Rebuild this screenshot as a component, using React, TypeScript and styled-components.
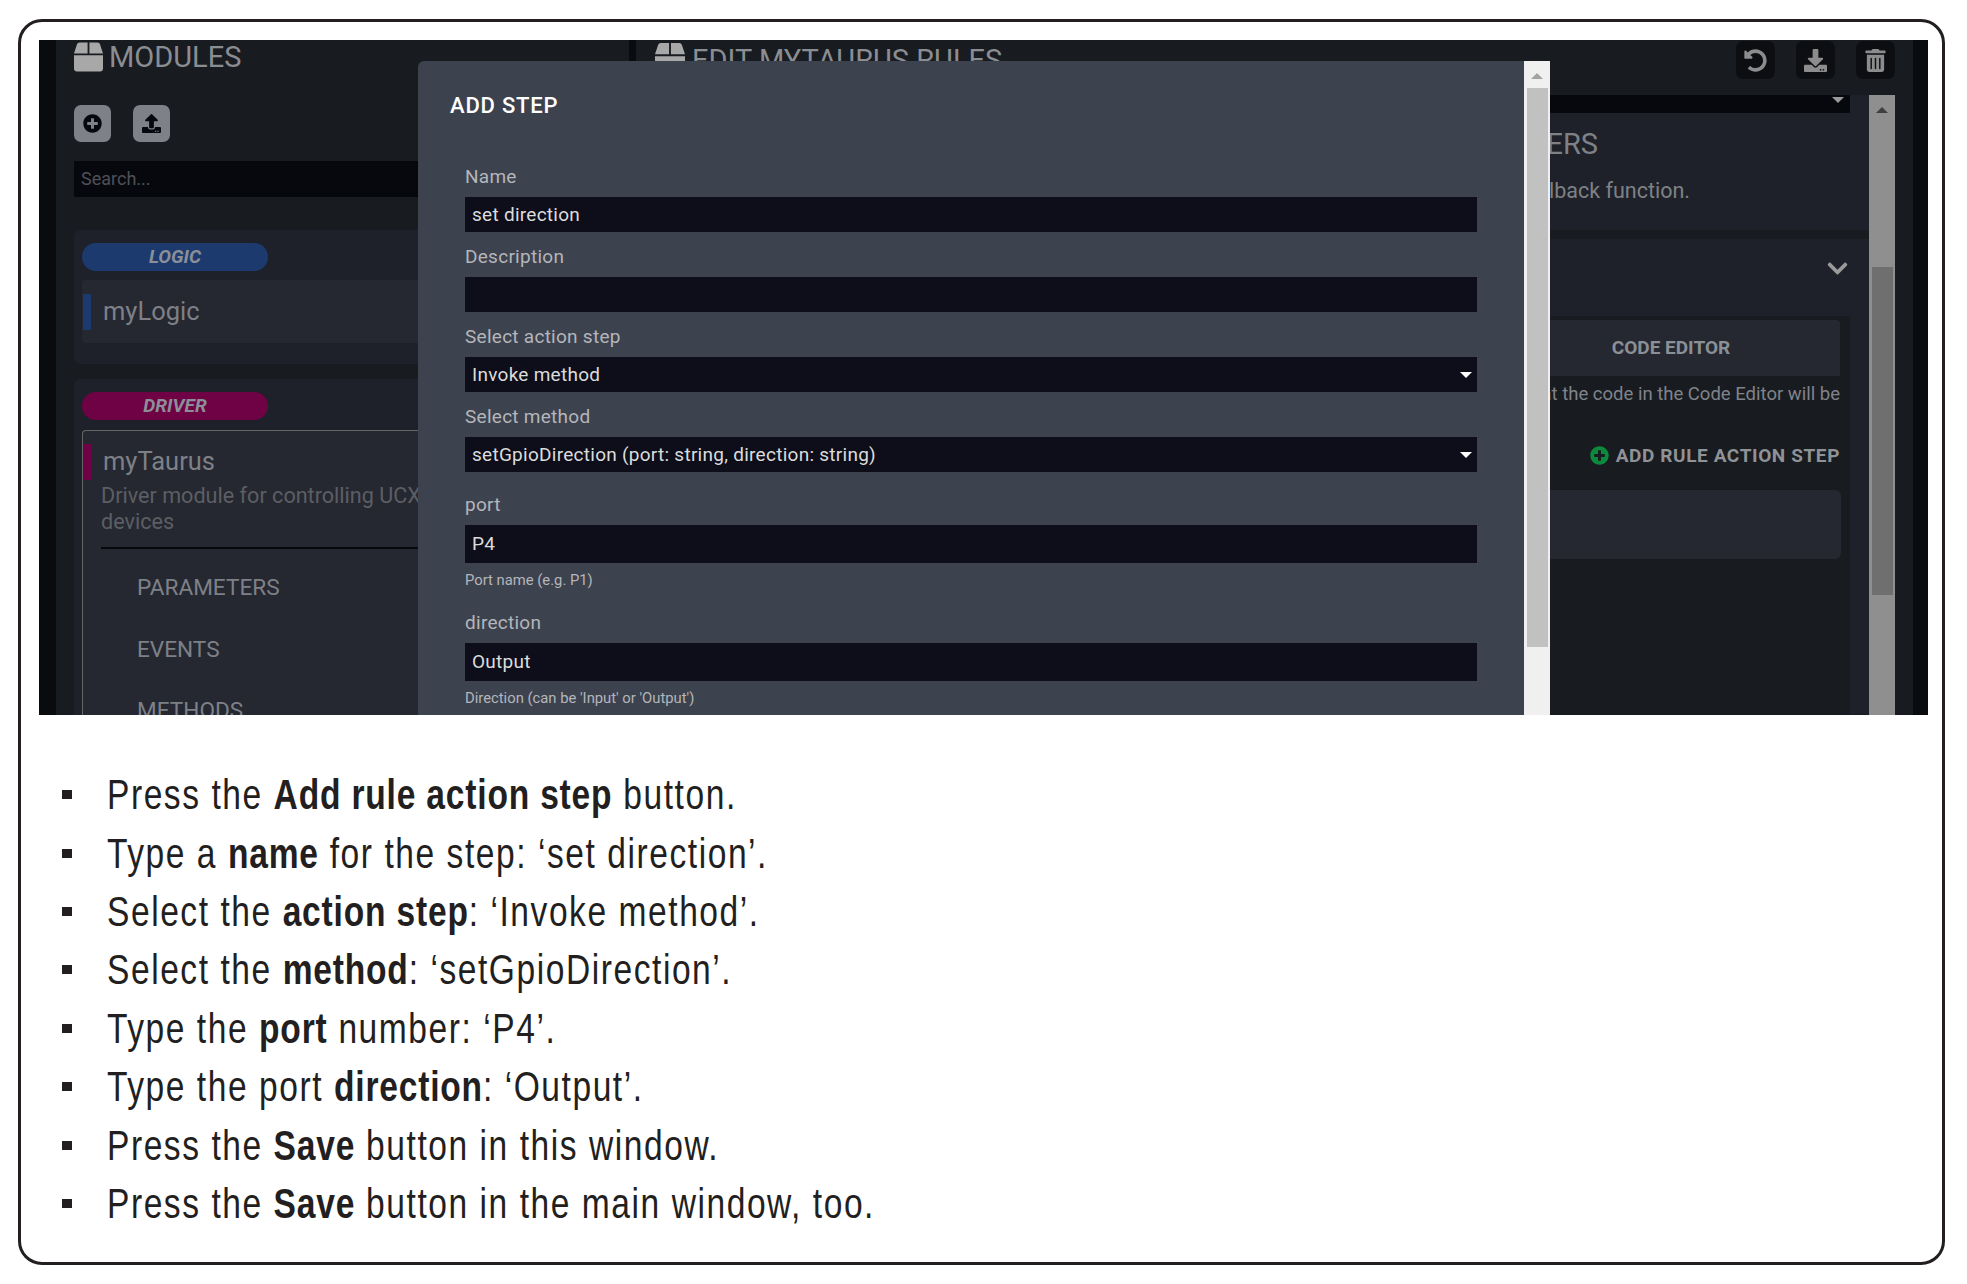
import React from 'react';
import styled, { createGlobalStyle } from 'styled-components';
import { FaBox, FaChevronDown, FaDownload, FaPlusCircle, FaTrashAlt, FaUndoAlt, FaUpload } from 'react-icons/fa';

const GlobalStyle = createGlobalStyle`
  html, body {
    margin: 0;
    background: #fff;
  }
  * {
    box-sizing: border-box;
  }
`;

const steps = [
  <>Press the <b>Add rule action step</b> button.</>,
  <>Type a <b>name</b> for the step: ‘set direction’.</>,
  <>Select the <b>action step</b>: ‘Invoke method’.</>,
  <>Select the <b>method</b>: ‘setGpioDirection’.</>,
  <>Type the <b>port</b> number: ‘P4’.</>,
  <>Type the port <b>direction</b>: ‘Output’.</>,
  <>Press the <b>Save</b> button in this window.</>,
  <>Press the <b>Save</b> button in the main window, too.</>,
];

export default function App() {
  return (
    <>
      <GlobalStyle />
      <Style.Frame>
        <Style.Shot>
          <Style.Gutter />
          <Style.Sidebar>
            <Style.PanelTitle>
              <FaBox />
              MODULES
            </Style.PanelTitle>
            <Style.ToolRow>
              <Style.LightButton><FaPlusCircle /></Style.LightButton>
              <Style.LightButton><FaUpload /></Style.LightButton>
            </Style.ToolRow>
            <Style.Search>Search...</Style.Search>

            <Style.Group>
              <Style.Pill $color="#1c3a6e">LOGIC</Style.Pill>
              <Style.Module>
                <Style.ModuleName $color="#1c3a6e">myLogic</Style.ModuleName>
              </Style.Module>
            </Style.Group>

            <Style.Group>
              <Style.Pill $color="#6f0145">DRIVER</Style.Pill>
              <Style.Module $selected>
                <Style.ModuleName $color="#6f0145">myTaurus</Style.ModuleName>
                <Style.ModuleText>Driver module for controlling UCX devices</Style.ModuleText>
                <Style.ModuleDivider />
                <Style.ModuleLink>PARAMETERS</Style.ModuleLink>
                <Style.ModuleLink>EVENTS</Style.ModuleLink>
                <Style.ModuleLink>METHODS</Style.ModuleLink>
              </Style.Module>
            </Style.Group>
          </Style.Sidebar>

          <Style.Main>
            <Style.MainHeader>
              <Style.MainTitle>
                <FaBox />
                EDIT MYTAURUS RULES
              </Style.MainTitle>
              <Style.Actions>
                <Style.DarkButton><FaUndoAlt /></Style.DarkButton>
                <Style.DarkButton><FaDownload /></Style.DarkButton>
                <Style.DarkButton><FaTrashAlt /></Style.DarkButton>
              </Style.Actions>
            </Style.MainHeader>
            <Style.MainBody>
              <Style.Sections>
                <Style.HandlerSection>
                  <Style.TopSelect><Style.TinyArrow /></Style.TopSelect>
                  <Style.SectionTitle>EVENT HANDLERS</Style.SectionTitle>
                  <Style.SectionText>Write the rule as a callback function.</Style.SectionText>
                </Style.HandlerSection>
                <Style.RuleSection>
                  <Style.ChevronRow><FaChevronDown /></Style.ChevronRow>
                  <Style.RuleBody>
                    <Style.Tabs>
                      <Style.Tab>BUILDER</Style.Tab>
                      <Style.Tab>CODE EDITOR</Style.Tab>
                    </Style.Tabs>
                    <Style.Note>Note that the code in the Code Editor will be</Style.Note>
                    <Style.AddStep>
                      <FaPlusCircle />
                      ADD RULE ACTION STEP
                    </Style.AddStep>
                    <Style.StepCard />
                  </Style.RuleBody>
                </Style.RuleSection>
              </Style.Sections>
              <Style.DimScrollbar>
                <Style.ScrollCap><Style.UpArrow $color="#3f3f3f" /></Style.ScrollCap>
                <Style.DimThumb />
              </Style.DimScrollbar>
            </Style.MainBody>
          </Style.Main>
          <Style.Gutter $narrow />

          <Style.Modal>
            <Style.ModalForm>
              <Style.ModalTitle>ADD STEP</Style.ModalTitle>
              <Style.Field>
                <Style.Label>Name</Style.Label>
                <Style.Input>set direction</Style.Input>
              </Style.Field>
              <Style.Field>
                <Style.Label>Description</Style.Label>
                <Style.Input />
              </Style.Field>
              <Style.Field>
                <Style.Label>Select action step</Style.Label>
                <Style.Input>Invoke method<Style.SelectArrow /></Style.Input>
              </Style.Field>
              <Style.Field>
                <Style.Label>Select method</Style.Label>
                <Style.Input>setGpioDirection (port: string, direction: string)<Style.SelectArrow /></Style.Input>
              </Style.Field>
              <Style.Params>
                <Style.Field $spaced>
                  <Style.Label>port</Style.Label>
                  <Style.Input $tall>P4</Style.Input>
                  <Style.Hint>Port name (e.g. P1)</Style.Hint>
                </Style.Field>
                <Style.Field $spaced>
                  <Style.Label>direction</Style.Label>
                  <Style.Input $tall>Output</Style.Input>
                  <Style.Hint>Direction (can be 'Input' or 'Output')</Style.Hint>
                </Style.Field>
              </Style.Params>
            </Style.ModalForm>
            <Style.ModalScrollbar>
              <Style.ScrollCap><Style.UpArrow $color="#a3a3a3" /></Style.ScrollCap>
              <Style.ModalThumb />
            </Style.ModalScrollbar>
          </Style.Modal>
        </Style.Shot>

        <Style.StepList>
          {steps.map((step, i) => (
            <Style.Step key={i}><Style.StepText>{step}</Style.StepText></Style.Step>
          ))}
        </Style.StepList>
      </Style.Frame>
    </>
  );
}

const Style = {
  Frame: styled.div`
    width: 1927px;
    height: 1246px;
    margin: 19px 0 0 18px;
    padding: 18px 0 0 18px;
    border: 3px solid #231f20;
    border-radius: 24px;
    background: #fff;
  `,
  Shot: styled.div`
    position: relative;
    display: flex;
    width: 1889px;
    height: 675px;
    overflow: hidden;
    background: #0a0b0e;
    font-family: Roboto, 'Liberation Sans', sans-serif;
  `,
  Gutter: styled.div<{ $narrow?: boolean }>`
    flex: none;
    width: ${p => (p.$narrow ? '15px' : '17px')};
    background: #0a0b0e;
  `,
  Sidebar: styled.div`
    flex: none;
    width: 573px;
    margin-right: 7px;
    padding: 0 0 0 18px;
    background: #181b20;
  `,
  PanelTitle: styled.div`
    display: flex;
    align-items: center;
    gap: 6px;
    height: 34px;
    font-size: 29px;
    line-height: 34px;
    color: #8a8d92;

    svg {
      width: 29px;
      height: 30px;
      color: #a8a8a8;
    }
  `,
  ToolRow: styled.div`
    display: flex;
    gap: 22px;
    margin-top: 31px;
  `,
  LightButton: styled.div`
    display: flex;
    align-items: center;
    justify-content: center;
    width: 37px;
    height: 37px;
    border-radius: 7px;
    background: #7e8188;
    color: #07080d;

    svg {
      width: 19px;
      height: 19px;
    }
  `,
  Search: styled.div`
    height: 36px;
    margin-top: 19px;
    padding-left: 7px;
    background: #07080d;
    font-size: 18px;
    line-height: 36px;
    color: #4f5157;
  `,
  Group: styled.div`
    margin-top: 33px;
    padding: 13px 0 21px 8px;
    border-radius: 6px;
    background: #1e2129;

    & + & {
      margin-top: 15px;
    }
  `,
  Pill: styled.div<{ $color: string }>`
    width: 186px;
    height: 28px;
    border-radius: 14px;
    background: ${p => p.$color};
    font-size: 19px;
    font-style: italic;
    font-weight: 700;
    line-height: 28px;
    text-align: center;
    color: #8b8f98;
  `,
  Module: styled.div<{ $selected?: boolean }>`
    min-height: 63px;
    margin-top: ${p => (p.$selected ? '10px' : '9px')};
    padding-top: 13px;
    border-radius: 4px;
    background: #252831;
    border-top: 1.5px solid ${p => (p.$selected ? '#666' : 'transparent')};
    border-left: 1.5px solid ${p => (p.$selected ? '#666' : 'transparent')};
  `,
  ModuleName: styled.div<{ $color: string }>`
    height: 36px;
    padding-left: 12px;
    border-left: 8px solid ${p => p.$color};
    font-size: 25.5px;
    line-height: 34px;
    color: #7e8087;
  `,
  ModuleText: styled.div`
    width: 350px;
    margin: 3px 0 0 18px;
    font-size: 21.6px;
    line-height: 26px;
    color: #5c5e64;
  `,
  ModuleDivider: styled.div`
    height: 2px;
    margin: 12px 0 8px 18px;
    background: #07080d;
  `,
  ModuleLink: styled.div`
    height: 61.5px;
    padding-left: 54px;
    font-size: 22.6px;
    line-height: 61.5px;
    color: #7e8087;
  `,
  Main: styled.div`
    display: flex;
    flex-direction: column;
    flex: 1;
    min-width: 0;
    background: #181b20;
  `,
  MainHeader: styled.div`
    display: flex;
    justify-content: space-between;
    flex: none;
    height: 55px;
    padding: 1px 18px 0 19px;
  `,
  MainTitle: styled.div`
    display: flex;
    align-items: flex-start;
    gap: 7px;
    padding-top: 2px;
    font-size: 29px;
    line-height: 34px;
    color: #8a8d92;

    svg {
      width: 30px;
      height: 30px;
      color: #a8a8a8;
    }
  `,
  Actions: styled.div`
    display: flex;
    gap: 21px;
  `,
  DarkButton: styled.div`
    display: flex;
    align-items: center;
    justify-content: center;
    width: 39px;
    height: 38px;
    border-radius: 7px;
    background: #0d0e12;
    color: #8c8c8c;

    svg {
      width: 23px;
      height: 23px;
    }
  `,
  MainBody: styled.div`
    display: flex;
    flex: 1;
    min-height: 0;
    padding-right: 18px;
  `,
  Sections: styled.div`
    flex: 1;
    min-width: 0;
  `,
  HandlerSection: styled.div`
    height: 135px;
    padding-right: 19px;
    background: #1e2129;
  `,
  TopSelect: styled.div`
    position: relative;
    height: 18px;
    background: #07080d;
  `,
  TinyArrow: styled.div`
    position: absolute;
    top: 2px;
    right: 6px;
    border-top: 6px solid #999;
    border-left: 6px solid transparent;
    border-right: 6px solid transparent;
  `,
  SectionTitle: styled.div`
    margin-top: 13px;
    padding-right: 252px;
    font-size: 29px;
    line-height: 36px;
    text-align: right;
    color: #7e8186;
  `,
  SectionText: styled.div`
    margin-top: 14px;
    padding-right: 160px;
    font-size: 21.5px;
    line-height: 30px;
    text-align: right;
    color: #7e8186;
  `,
  RuleSection: styled.div`
    height: 475px;
    margin-top: 9px;
    padding-right: 19px;
    background: #1e2129;
  `,
  ChevronRow: styled.div`
    display: flex;
    align-items: center;
    justify-content: flex-end;
    height: 77px;
    padding: 0 1px 19px 0;
    color: #9a9a9a;

    svg {
      width: 23px;
      height: 23px;
    }
  `,
  RuleBody: styled.div`
    height: 398px;
    padding: 4px 9px 0 0;
    background: #181b20;
  `,
  Tabs: styled.div`
    display: flex;
    justify-content: flex-end;
    padding-right: 1px;
  `,
  Tab: styled.div`
    width: 338px;
    height: 56px;
    border-radius: 4px 4px 0 0;
    background: #252831;
    font-size: 19px;
    font-weight: 700;
    line-height: 56px;
    text-align: center;
    color: #8b8f96;
  `,
  Note: styled.div`
    margin-top: 6px;
    padding-right: 1px;
    font-size: 18.5px;
    line-height: 24px;
    text-align: right;
    color: #80838a;
  `,
  AddStep: styled.div`
    display: flex;
    align-items: center;
    justify-content: flex-end;
    gap: 7px;
    height: 24px;
    margin-top: 37px;
    padding-right: 1px;
    font-size: 19px;
    font-weight: 700;
    letter-spacing: 0.6px;
    color: #8f9296;

    svg {
      width: 19px;
      height: 19px;
      color: #0a8a3a;
    }
  `,
  StepCard: styled.div`
    height: 69px;
    margin-top: 23px;
    border-radius: 6px;
    background: #252831;
  `,
  DimScrollbar: styled.div`
    flex: none;
    width: 26px;
    background: #8f8f8f;
  `,
  DimThumb: styled.div`
    width: 21px;
    height: 328px;
    margin: 142px auto 0;
    background: #6f6f6f;
  `,
  ScrollCap: styled.div`
    display: flex;
    align-items: center;
    justify-content: center;
    height: 30px;
  `,
  UpArrow: styled.div<{ $color: string }>`
    border-bottom: 6px solid ${p => p.$color};
    border-left: 6px solid transparent;
    border-right: 6px solid transparent;
  `,
  Modal: styled.div`
    position: absolute;
    top: 21px;
    left: 379px;
    display: flex;
    width: 1132px;
    height: 654px;
    overflow: hidden;
    border-radius: 6px 0 0 0;
    background: #3d424f;
  `,
  ModalForm: styled.div`
    flex: 1;
    min-width: 0;
    padding: 31px 47px 0;
  `,
  ModalTitle: styled.div`
    margin: 0 0 47px -15px;
    font-size: 22px;
    font-weight: 500;
    letter-spacing: 0.8px;
    line-height: 28px;
    color: #fff;
  `,
  Params: styled.div`
    margin-top: 23px;
  `,
  Field: styled.div<{ $spaced?: boolean }>`
    margin-bottom: ${p => (p.$spaced ? '25px' : '15px')};
  `,
  Label: styled.div`
    margin-bottom: 10px;
    font-size: 19px;
    letter-spacing: 0.27px;
    line-height: 20px;
    color: #b4b6ba;
  `,
  Input: styled.div<{ $tall?: boolean }>`
    position: relative;
    height: ${p => (p.$tall ? '38px' : '35px')};
    padding-left: 7px;
    background: #0d0e19;
    font-size: 19px;
    letter-spacing: 0.27px;
    line-height: ${p => (p.$tall ? '38px' : '35px')};
    color: #dcdcdc;
  `,
  SelectArrow: styled.div`
    position: absolute;
    top: 15px;
    right: 5px;
    border-top: 6px solid #fff;
    border-left: 6px solid transparent;
    border-right: 6px solid transparent;
  `,
  Hint: styled.div`
    margin-top: 9px;
    font-size: 14.8px;
    line-height: 16px;
    color: #b4b6ba;
  `,
  ModalScrollbar: styled.div`
    flex: none;
    width: 26px;
    background: #f1f0f0;
  `,
  ModalThumb: styled.div`
    width: 21px;
    height: 559px;
    margin: -3px auto 0;
    background: #c1c1c1;
  `,
  StepList: styled.ul`
    margin: 50.5px 0 0;
    padding: 0 0 0 23px;
    list-style: none;
    font-family: 'Liberation Sans', Arial, sans-serif;
    font-size: 43px;
    color: #231f20;
  `,
  Step: styled.li`
    display: grid;
    grid-template-columns: 45px 1fr;
    align-items: center;
    height: 58.4px;

    &::before {
      content: '';
      width: 10px;
      height: 9px;
      background: #231f20;
    }
  `,
  // no condensed face is installed, so the regular one is squeezed
  StepText: styled.span`
    display: inline-block;
    letter-spacing: 2px;
    white-space: nowrap;
    transform: scaleX(0.78);
    transform-origin: left center;

    b {
      letter-spacing: 1.05px;
    }
  `,
};
